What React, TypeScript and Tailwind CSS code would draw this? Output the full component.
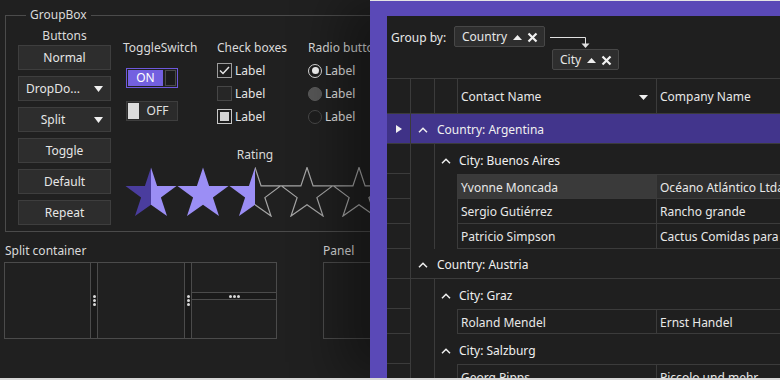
import React from 'react';

const line = 'border-[#3b3b3b]';
const STAR = '26,0.5 32.1,18.9 51.5,18.9 35.9,30.6 42,49 26,37.8 10,49 16.1,30.6 0.5,18.9 19.9,18.9';

function Star({ id, left, right }: { id: string; left?: string; right?: string }) {
  const half = (side: 'l' | 'r', color?: string) =>
    color ? (
      <polygon points={STAR} fill={color} clipPath={`url(#${id}-${side})`} />
    ) : (
      <polygon points={STAR} fill="none" stroke="#a6a6a6" strokeWidth="1.2" clipPath={`url(#${id}-${side})`} />
    );
  return (
    <svg width="52" height="50" viewBox="0 0 52 50">
      <defs>
        <clipPath id={`${id}-l`}>
          <rect x="0" y="0" width="26" height="50" />
        </clipPath>
        <clipPath id={`${id}-r`}>
          <rect x="26" y="0" width="26" height="50" />
        </clipPath>
      </defs>
      {half('l', left)}
      {half('r', right)}
    </svg>
  );
}

function Caret({ up, className = '' }: { up?: boolean; className?: string }) {
  return (
    <svg width="9" height="5" viewBox="0 0 9 5" className={className}>
      <polygon points={up ? '0,5 9,5 4.5,0' : '0,0 9,0 4.5,5'} fill="#f0f0f0" />
    </svg>
  );
}

function Cross() {
  return (
    <svg width="11" height="11" viewBox="0 0 11 11">
      <path d="M1.5 1.5 L9.5 9.5 M9.5 1.5 L1.5 9.5" stroke="#f2f2f2" strokeWidth="2.2" />
    </svg>
  );
}

function Chevron() {
  return (
    <svg width="10" height="6" viewBox="0 0 10 6">
      <path d="M1 5.2 L5 1.2 L9 5.2" fill="none" stroke="#f0f0f0" strokeWidth="1.5" />
    </svg>
  );
}

function Dots({ vertical }: { vertical?: boolean }) {
  return (
    <div className={`flex gap-[1px] ${vertical ? 'flex-col' : 'flex-row'}`}>
      <span className="w-[3px] h-[3px] rounded-full bg-[#d8d8d8]" />
      <span className="w-[3px] h-[3px] rounded-full bg-[#d8d8d8]" />
      <span className="w-[3px] h-[3px] rounded-full bg-[#d8d8d8]" />
    </div>
  );
}

function Btn({ label, drop }: { label: string; drop?: boolean }) {
  return (
    <div className="h-[25px] flex items-center pt-[1px] bg-[#2d2d2d] border border-[#3e3e3e] text-[#e6e6e6]">
      <span className="flex-1 text-center">{label}</span>
      {drop && (
        <span className="w-[23px] flex justify-center">
          <svg width="9" height="6" viewBox="0 0 9 6">
            <polygon points="0,0 9,0 4.5,6" fill="#f0f0f0" />
          </svg>
        </span>
      )}
    </div>
  );
}

function Indicator({ children, purple }: { children?: React.ReactNode; purple?: boolean }) {
  return (
    <div className={`w-[24px] shrink-0 border-r border-b ${line} flex items-center justify-center ${purple ? 'bg-[#3f3287]' : ''}`}>
      {children}
    </div>
  );
}

function CountryRow({ name, active }: { name: string; active?: boolean }) {
  return (
    <div className={`h-[30px] flex ${active ? 'bg-[#42358c]' : ''}`}>
      <Indicator purple={active}>
        {active && (
          <svg width="6" height="8" viewBox="0 0 6 8">
            <polygon points="0,0 6,4 0,8" fill="#f0f0f0" />
          </svg>
        )}
      </Indicator>
      <div className={`flex-1 border-b ${line} flex items-center pt-[2px] pl-[7px] gap-[9px] text-[#f0f0f0]`}>
        <Chevron />
        <span>Country: {name}</span>
      </div>
    </div>
  );
}

function CityRow({ name }: { name: string }) {
  return (
    <div className="h-[30px] flex">
      <Indicator />
      <div className={`w-[24px] shrink-0 border-r ${line}`} />
      <div className="flex-1 flex items-center pt-[3px] pl-[6px] gap-[8px] text-[#f0f0f0]">
        <Chevron />
        <span>City: {name}</span>
      </div>
    </div>
  );
}

function DataRow({ contact, company, first, selected }: { contact: string; company: string; first?: boolean; selected?: boolean }) {
  const edge = first ? 'border-t' : '';
  return (
    <div className="h-[25px] flex">
      <Indicator />
      <div className={`w-[24px] shrink-0 border-r ${line}`} />
      <div className={`w-[23px] shrink-0 border-r ${line}`} />
      <div className={`w-[199px] shrink-0 border-r border-b ${edge} ${line} flex items-center pt-[2px] pl-[3px] ${selected ? 'bg-[#3a3a3a]' : ''}`}>
        {contact}
      </div>
      <div className={`flex-1 border-b ${edge} ${line} flex items-center pt-[2px] pl-[3px] whitespace-nowrap overflow-hidden ${selected ? 'bg-[#2e2e2e]' : ''}`}>
        {company}
      </div>
    </div>
  );
}

export default function App() {
  return (
    <div className="w-[780px] h-[380px] overflow-hidden flex bg-[#202020] text-[12px] text-[#e4e4e4] font-['Noto_Sans',sans-serif] border-b-2 border-[#d9d9d9]">
      {/* Controls side */}
      <div className="w-[370px] shrink-0 overflow-hidden">
        <fieldset className="ml-[5px] mt-[7px] w-[440px] h-[225px] border border-[#4b4b4b] px-[12px]">
          <legend className="ml-[8px] px-[4px] leading-[16px] text-[#dadada]">GroupBox</legend>
          <div className="flex">
            <div className="w-[93px] shrink-0 flex flex-col">
              <div className="mt-[5px] leading-[16px] text-center text-[#dadada]">Buttons</div>
              <div className="mt-[1px] flex flex-col gap-[6px]">
                <Btn label="Normal" />
                <Btn label="DropDo..." drop />
                <Btn label="Split" drop />
                <Btn label="Toggle" />
                <Btn label="Default" />
                <Btn label="Repeat" />
              </div>
            </div>

            <div className="ml-[12px] flex flex-col">
              <div className="flex mt-[17px]">
                <div className="w-[94px] shrink-0">
                  <div className="leading-[16px] text-[#dadada]">ToggleSwitch</div>
                  <div className="mt-[12px] ml-[3px] w-[52px] h-[20px] border border-[#6e58dc] flex p-[1px]">
                    <div className="flex-1 bg-[#7360e0] flex items-center justify-center text-white">ON</div>
                    <div className="w-[11px] ml-[2px] border border-[#4a4a4a] bg-[#1c1c1c]" />
                  </div>
                  <div className="mt-[13px] ml-[3px] w-[52px] h-[20px] border border-[#3e3e3e] bg-[#2b2b2b] flex items-center p-[1px]">
                    <div className="w-[11px] h-full bg-[#dcdcdc]" />
                    <span className="flex-1 text-center text-[#e0e0e0]">OFF</span>
                  </div>
                </div>

                <div className="w-[91px] shrink-0">
                  <div className="leading-[16px] text-[#dadada]">Check boxes</div>
                  <div className="mt-[3px]">
                    <div className="h-[23px] flex items-center gap-[3px]">
                      <div className="w-[15px] h-[15px] border border-[#9c9c9c] bg-[#1e1e1e] flex items-center justify-center">
                        <svg width="11" height="9" viewBox="0 0 11 9">
                          <path d="M1 4.5 L4 7.5 L10 1" fill="none" stroke="#e6e6e6" strokeWidth="1.5" />
                        </svg>
                      </div>
                      <span>Label</span>
                    </div>
                    <div className="h-[23px] flex items-center gap-[3px]">
                      <div className="w-[15px] h-[15px] border border-[#464646] bg-[#262626]" />
                      <span>Label</span>
                    </div>
                    <div className="h-[23px] flex items-center gap-[3px]">
                      <div className="w-[15px] h-[15px] border border-[#c8c8c8] bg-[#1e1e1e] flex items-center justify-center">
                        <div className="w-[9px] h-[9px] bg-[#d4d4d4]" />
                      </div>
                      <span>Label</span>
                    </div>
                  </div>
                </div>

                <div className="w-[100px] shrink-0">
                  <div className="leading-[16px] whitespace-nowrap text-[#dadada]">Radio buttons</div>
                  <div className="mt-[3px]">
                    <div className="h-[23px] flex items-center gap-[3px]">
                      <div className="w-[14px] h-[14px] rounded-full border border-[#d8d8d8] bg-[#1e1e1e] flex items-center justify-center">
                        <div className="w-[7px] h-[7px] rounded-full bg-[#f0f0f0]" />
                      </div>
                      <span>Label</span>
                    </div>
                    <div className="h-[23px] flex items-center gap-[3px]">
                      <div className="w-[14px] h-[14px] rounded-full border border-[#5c5c5c] bg-[#565656]" />
                      <span>Label</span>
                    </div>
                    <div className="h-[23px] flex items-center gap-[3px]">
                      <div className="w-[14px] h-[14px] rounded-full border border-[#484848] bg-[#1e1e1e]" />
                      <span>Label</span>
                    </div>
                  </div>
                </div>
              </div>

              <div className="mt-[19px] ml-[2px] w-[260px] flex flex-col items-center">
                <div className="leading-[16px] text-[#dadada]">Rating</div>
                <div className="mt-[4px] flex">
                  <Star id="s1" left="#4a3d9e" right="#9b8ef5" />
                  <Star id="s2" left="#9b8ef5" right="#9b8ef5" />
                  <Star id="s3" left="#9b8ef5" />
                  <Star id="s4" />
                  <Star id="s5" />
                </div>
              </div>
            </div>
          </div>
        </fieldset>

        <div className="flex mt-[11px] ml-[4px]">
          <div>
            <div className="pl-[1px] leading-[16px] text-[#dadada]">Split container</div>
            <div className="mt-[3px] w-[273px] h-[77px] border border-[#4b4b4b] flex">
              <div className="w-[85px]" />
              <div className="w-[8px] border-x border-[#4b4b4b] bg-[#1a1a1a] flex items-center justify-center">
                <Dots vertical />
              </div>
              <div className="w-[86px]" />
              <div className="w-[8px] border-x border-[#4b4b4b] bg-[#1a1a1a] flex items-center justify-center">
                <Dots vertical />
              </div>
              <div className="flex-1 flex flex-col">
                <div className="h-[29px]" />
                <div className="h-[8px] border-y border-[#4b4b4b] bg-[#1a1a1a] flex items-center justify-center">
                  <Dots />
                </div>
                <div className="flex-1" />
              </div>
            </div>
          </div>
          <div className="ml-[46px]">
            <div className="leading-[16px] text-[#dadada]">Panel</div>
            <div className="mt-[3px] w-[100px] h-[77px] border border-[#4b4b4b]" />
          </div>
        </div>
      </div>

      {/* Grid side */}
      <div className="relative z-10 flex-1 bg-[#5a49b7] border-t border-[#e4e4e4] pl-[17px] pt-[15px] shadow-[-30px_0_45px_rgba(0,0,0,0.35)]">
        <div className="h-full bg-[#1f1f1f] text-[#e8e8e8] whitespace-nowrap overflow-hidden">
          <div className="relative h-[62px] flex items-start pl-[4px] pt-[10px]">
            <div className="w-[63px] leading-[21px] pt-[1px]">Group by:</div>
            <div className="h-[21px] w-[91px] border border-[#474747] bg-[#2e2e2e] rounded-[2px] flex items-center pt-[1px] pl-[7px]">
              <span>Country</span>
              <Caret up className="ml-[6px]" />
              <span className="ml-[5px]"><Cross /></span>
            </div>
            <div className="mt-[23px] ml-[7px] h-[21px] w-[67px] border border-[#474747] bg-[#2e2e2e] rounded-[2px] flex items-center pt-[1px] pl-[7px]">
              <span>City</span>
              <Caret up className="ml-[6px]" />
              <span className="ml-[5px]"><Cross /></span>
            </div>
            <svg className="absolute left-[160px] top-[18px]" width="46" height="16" viewBox="0 0 46 16">
              <path d="M3 3.5 H38.5 V10" fill="none" stroke="#e0e0e0" strokeWidth="1" />
              <polygon points="34.5,9.5 42.5,9.5 38.5,14" fill="#e0e0e0" />
            </svg>
          </div>

          <div className={`h-[36px] flex border-y ${line}`}>
            <div className={`w-[24px] shrink-0 border-r ${line}`} />
            <div className={`w-[24px] shrink-0 border-r ${line}`} />
            <div className={`w-[23px] shrink-0 border-r ${line}`} />
            <div className={`w-[199px] shrink-0 border-r ${line} flex items-center justify-between pt-[2px] pl-[3px] pr-[8px]`}>
              <span>Contact Name</span>
              <Caret />
            </div>
            <div className="flex-1 flex items-center pt-[2px] pl-[3px]">Company Name</div>
          </div>

          <CountryRow name="Argentina" active />
          <CityRow name="Buenos Aires" />
          <DataRow contact="Yvonne Moncada" company="Océano Atlántico Ltda." first selected />
          <DataRow contact="Sergio Gutiérrez" company="Rancho grande" />
          <DataRow contact="Patricio Simpson" company="Cactus Comidas para llevar" />
          <CountryRow name="Austria" />
          <CityRow name="Graz" />
          <DataRow contact="Roland Mendel" company="Ernst Handel" first />
          <CityRow name="Salzburg" />
          <DataRow contact="Georg Pipps" company="Piccolo und mehr" first />
        </div>
      </div>
    </div>
  );
}
